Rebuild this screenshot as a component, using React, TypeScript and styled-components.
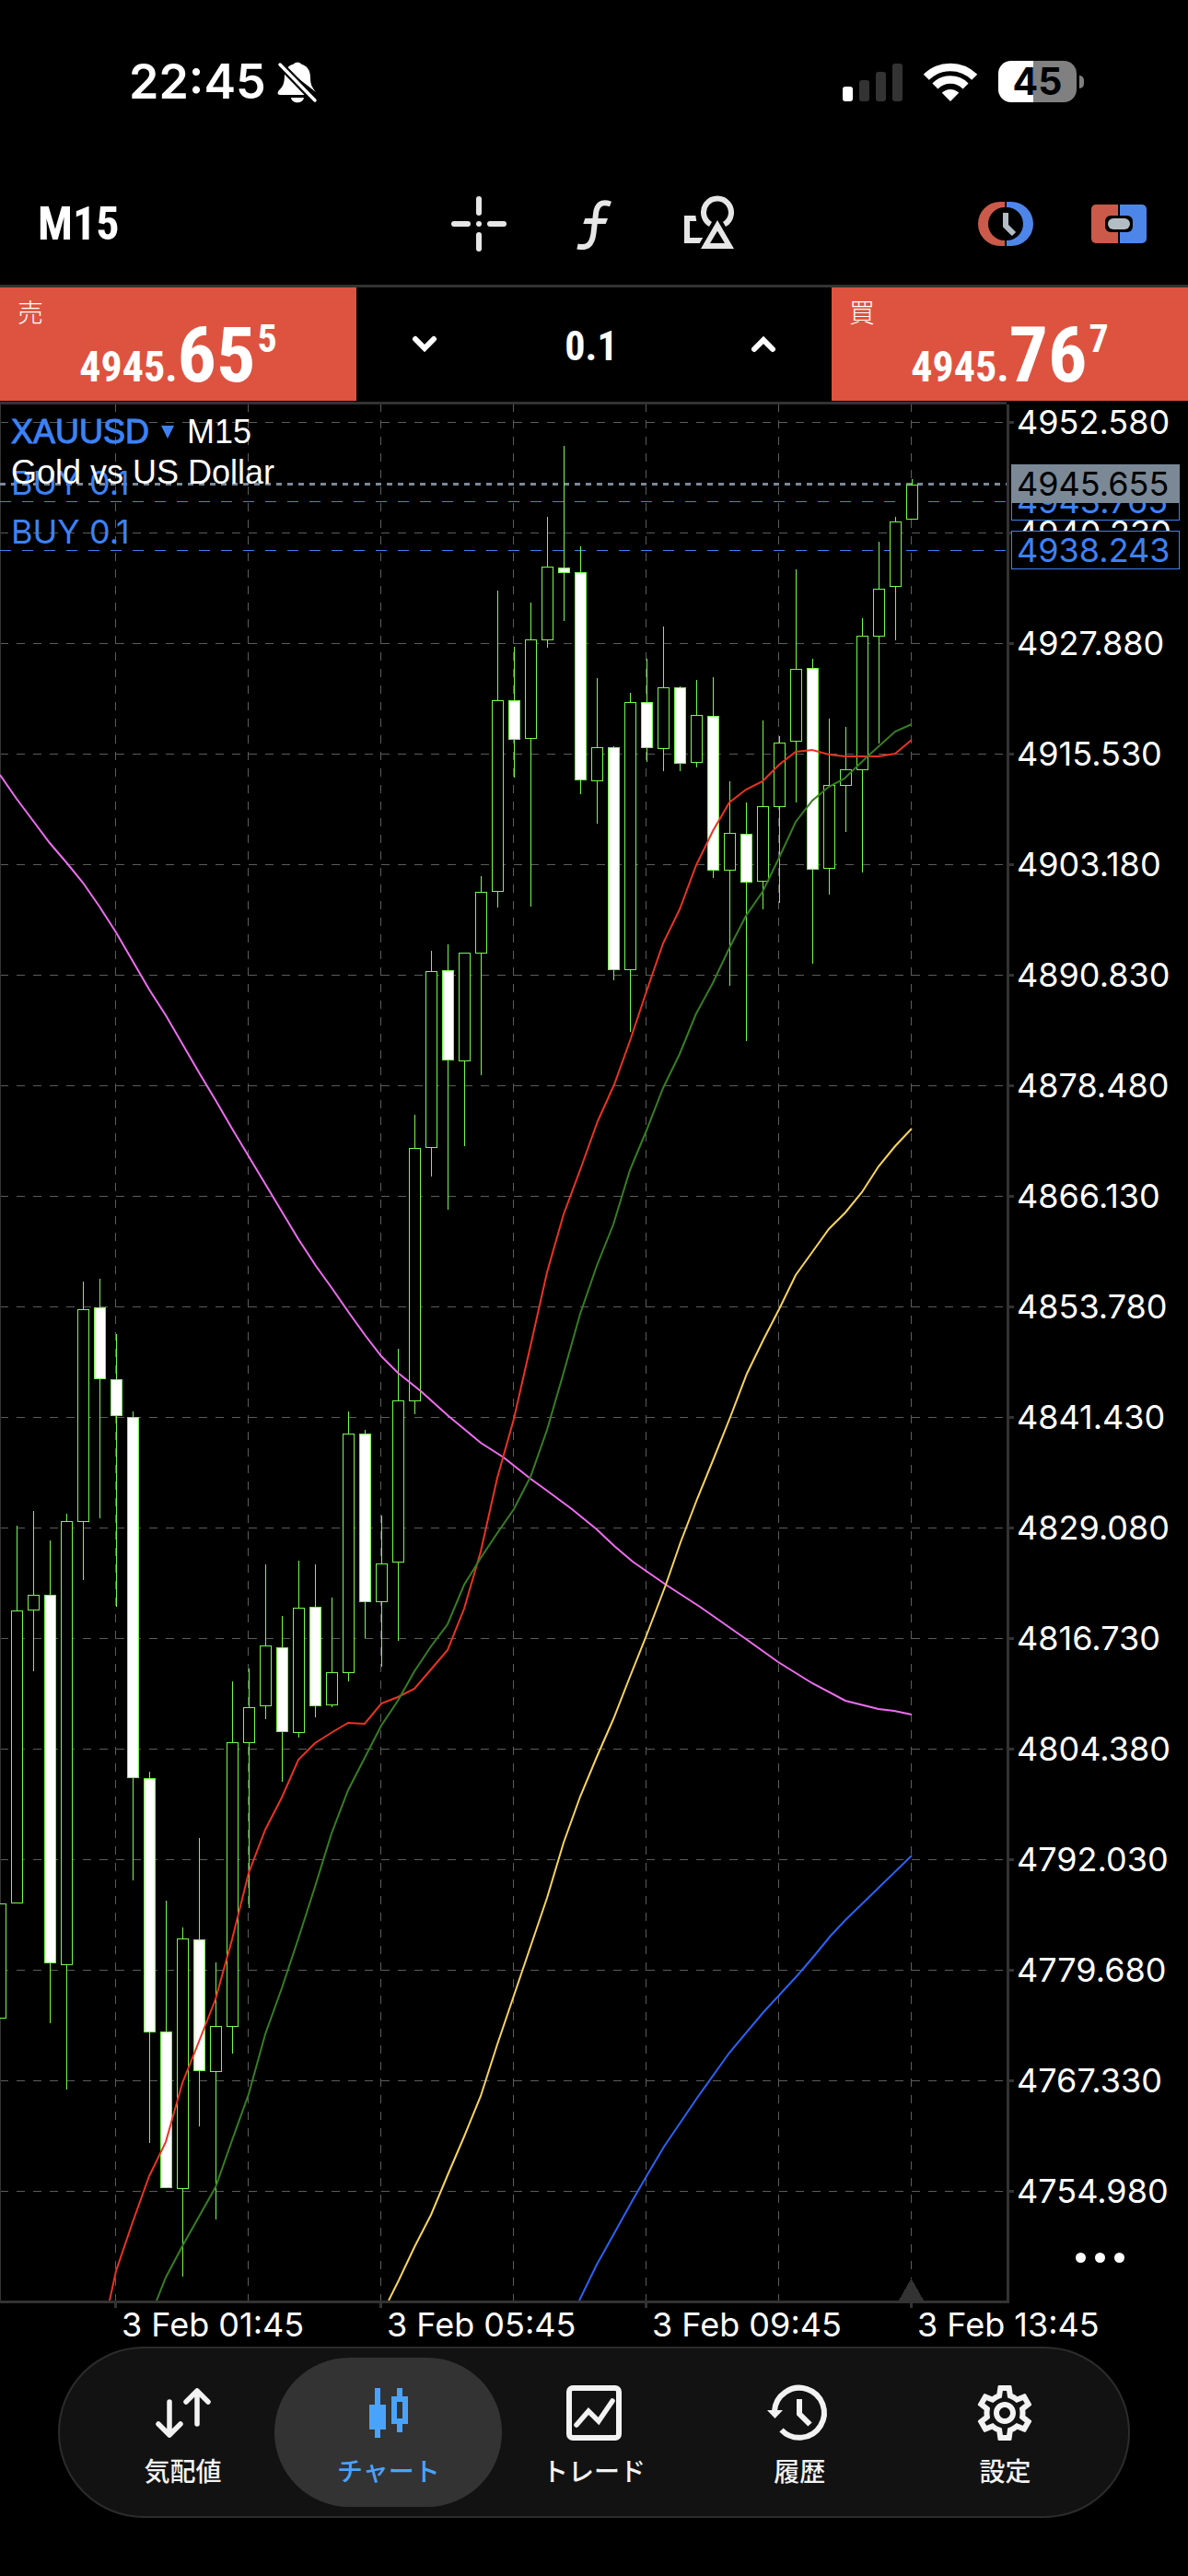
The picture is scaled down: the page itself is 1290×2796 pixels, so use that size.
import React, { useState } from "react";
import styled, { createGlobalStyle } from "styled-components";
import { MdOutlineSettings } from "react-icons/md";

const color = {
  bg: "#000000",
  rule: "#333333",
  grid: "#5c5c5c",
  bar: "#121212",
  sell: "#de5340",
  link: "#3c82f6",
  active: "#4aa3fa",
  icon: "#e6e6e6",
  tag: "#7b8997",
  bull: "#75fb4c",
};

const ui = `Inter, "Noto Sans CJK JP", sans-serif`;
const narrow = `"Liberation Sans Narrow", "Roboto Condensed", Roboto, sans-serif`;
const chartFont = `"Liberation Sans", Arial, sans-serif`;

const Global = createGlobalStyle`
  * { box-sizing: border-box; }
  body { margin: 0; background: ${color.bg}; color: #fff; font-family: ${ui}; }
  button, input { font: inherit; color: inherit; background: none; border: 0; padding: 0; margin: 0; }
  svg { display: block; }
`;

const Page = styled.main`
  display: flex;
  flex-direction: column;
  min-height: 100vh;
  background: ${color.bg};
`;

/* ---------- status bar ---------- */

const StatusBar = styled.header`
  display: flex;
  align-items: center;
  justify-content: space-between;
  height: 177px;
  padding: 0 113px 0 140px;
`;

const StatusGroup = styled.div<{ $gap: number }>`
  display: flex;
  align-items: center;
  gap: ${(p) => p.$gap}px;
`;

const Clock = styled.time`
  font-size: 52px;
  line-height: 60px;
  font-weight: 600;
`;

const Battery = styled.div`
  display: flex;
  align-items: center;
  gap: 3px;
  &::after {
    content: "";
    width: 5px;
    height: 14px;
    border-radius: 0 7px 7px 0;
    background: #808080;
  }
`;

const BatteryCell = styled.div<{ $level: number }>`
  width: 85px;
  height: 45px;
  border-radius: 14px;
  background: linear-gradient(to right, #fff ${(p) => p.$level}%, #808080 ${(p) => p.$level}%);
  color: #000;
  font-size: 41px;
  line-height: 45px;
  font-weight: 700;
  text-align: center;
`;

/* ---------- toolbar ---------- */

const Toolbar = styled.div`
  display: grid;
  grid-template-columns: 1fr auto 1fr;
  align-items: center;
  height: 132px;
  padding: 0 41px;
`;

const Timeframe = styled.button`
  justify-self: start;
  font-family: ${narrow};
  font-size: 50px;
  line-height: 60px;
  font-weight: 700;
`;

const ToolGroup = styled.div<{ $end?: boolean }>`
  display: flex;
  gap: ${(p) => (p.$end ? 63 : 65)}px;
  justify-self: ${(p) => (p.$end ? "end" : "center")};
  padding-right: ${(p) => (p.$end ? 4 : 0)}px;
`;

const IconButton = styled.button`
  width: 60px;
  height: 60px;
  color: ${color.icon};
`;

/* ---------- one-click trading ---------- */

const TradePanel = styled.section`
  display: grid;
  grid-template-columns: 3fr 4fr 3fr;
  height: 127px;
  border-top: 3px solid ${color.rule};
  padding-bottom: 1px;
`;

const QuoteButton = styled.button`
  display: flex;
  flex-direction: column;
  align-items: center;
  background: ${color.sell};
  height: 123px;
`;

const Side = styled.span`
  align-self: flex-start;
  padding: 8px 0 0 19px;
  font-family: "Noto Sans CJK JP", sans-serif;
  font-size: 28px;
  line-height: 36px;
  height: 38px;
  font-weight: 300;
`;

const Price = styled.span`
  display: flex;
  align-items: baseline;
  font-family: ${narrow};
  font-weight: 700;
  font-size: 46px;
  line-height: 72px;
`;

const Pips = styled.span`
  font-size: 84px;
`;

const Fraction = styled.sup`
  align-self: flex-start;
  padding-left: 2px;
  font-size: 42px;
  line-height: 36px;
  vertical-align: baseline;
`;

const Volume = styled.div`
  display: grid;
  grid-template-columns: 148px 1fr 148px;
  align-items: center;
`;

const StepButton = styled.button`
  display: grid;
  place-items: center;
  height: 120px;
`;

const VolumeInput = styled.input`
  width: 100%;
  padding: 4px 6px 0 0;
  text-align: center;
  font-family: ${narrow};
  font-size: 44px;
  line-height: 56px;
  font-weight: 700;
`;

/* ---------- chart ---------- */

const ChartArea = styled.section`
  flex: 1 0 1200px;
  display: grid;
  grid-template-columns: 1fr 197px;
`;

const Plot = styled.div`
  position: relative;
  border-top: 3px solid ${color.rule};
  border-bottom: 3px solid ${color.rule};
`;

const PlotSvg = styled.svg`
  position: absolute;
  inset: 0;
  width: 100%;
  height: 100%;
`;

const Caption = styled.div`
  position: absolute;
  top: 8px;
  left: 12px;
  font-family: ${chartFont};
  font-size: 36px;
  line-height: 44px;
  white-space: nowrap;
`;

const CaptionRow = styled.div`
  display: flex;
  align-items: center;
  gap: 13px;
`;

const SymbolButton = styled.button`
  display: flex;
  align-items: center;
  gap: 12px;
  color: ${color.link};
  -webkit-text-stroke: 1px ${color.link};
`;

const OrderLabel = styled.span`
  position: absolute;
  left: 12px;
  transform: translateY(-40px);
  color: ${color.link};
  font-size: 36px;
  line-height: 40px;
`;

const PriceAxis = styled.div`
  position: relative;
  display: flex;
  flex-direction: column;
  justify-content: space-between;
  margin-top: 3px;
  padding-bottom: 103px;
  border-left: 3px solid ${color.rule};
`;

const PriceLabel = styled.span`
  display: flex;
  align-items: center;
  gap: 3px;
  font-size: 36px;
  line-height: 38px;
  &::before {
    content: "";
    width: 5px;
    height: 3px;
    background: ${color.rule};
  }
`;

const TagLayer = styled.div`
  position: absolute;
  inset: 0 0 3px 2px;
`;

const PriceTag = styled.span<{ $solid?: boolean }>`
  position: absolute;
  left: 0;
  right: 9px;
  height: 42px;
  transform: translateY(-50%);
  padding-left: 5px;
  border: 1px solid ${(p) => (p.$solid ? color.tag : color.link)};
  background: ${(p) => (p.$solid ? color.tag : color.bg)};
  color: ${(p) => (p.$solid ? "#000" : color.link)};
  font-size: 36px;
  line-height: 40px;
`;

const MoreButton = styled.button`
  position: absolute;
  right: 60px;
  bottom: 30px;
  width: 72px;
  height: 40px;
  display: flex;
  align-items: center;
  justify-content: center;
  gap: 10px;
  i {
    width: 11px;
    height: 11px;
    border-radius: 50%;
    background: #fff;
  }
`;

const TimeAxis = styled.div`
  display: grid;
  grid-template-columns: repeat(4, 1fr);
  height: 47px;
  padding: 3px 5px 0 125px;
  margin-right: 8px;
`;

const TimeLabel = styled.span`
  position: relative;
  padding-left: 7px;
  font-size: 36px;
  line-height: 40px;
  white-space: nowrap;
  &::before {
    content: "";
    position: absolute;
    left: -1px;
    top: -3px;
    width: 3px;
    height: 5px;
    background: ${color.rule};
  }
`;

/* ---------- tab bar ---------- */

const TabBar = styled.nav`
  display: flex;
  margin: 0 63px 63px;
  padding: 10px 22px;
  border: 2px solid #2c2c2c;
  border-radius: 93px;
  background: ${color.bar};
`;

const Tab = styled.a<{ $active?: boolean }>`
  flex: 1;
  display: flex;
  flex-direction: column;
  align-items: center;
  gap: 14px;
  height: 162px;
  margin: 0 -12px;
  padding: 30px 12px 0;
  border-radius: 81px;
  background: ${(p) => (p.$active ? "#333333" : "transparent")};
  color: ${(p) => (p.$active ? color.active : "#f2f2f2")};
  font-family: "Noto Sans CJK JP", sans-serif;
  font-size: 28px;
  line-height: 36px;
  font-weight: 500;
  text-decoration: none;
`;

/* ---------- data ---------- */

const TOP_Y = 439;
const PLOT_H = 2058;
const PLOT_W = 1093;
const STEP = 18;

const priceToY = (p: number) => 458 + ((4952.58 - p) * 120) / 12.35;
const priceToTop = (p: number) => `${((priceToY(p) - TOP_Y) / PLOT_H) * 100}%`;

const axisPrices = Array.from({ length: 17 }, (_, i) => (4952.58 - i * 12.35).toFixed(3));
const times = ["3 Feb 01:45", "3 Feb 05:45", "3 Feb 09:45", "3 Feb 13:45"];

// high, body top, body bottom, low, 1 = falling bar
const candles: number[][] = [
  [2066, 2066, 2190, 2190, 0],
  [1656, 1748, 2065, 2065, 0],
  [1640, 1731, 1747, 1813, 0],
  [1672, 1731, 2130, 2195, 1],
  [1643, 1651, 2132, 2267, 0],
  [1391, 1421, 1651, 1714, 0],
  [1388, 1419, 1496, 1647, 1],
  [1448, 1497, 1536, 1743, 1],
  [1532, 1538, 1929, 2040, 1],
  [1923, 1930, 2205, 2325, 1],
  [2063, 2205, 2374, 2374, 1],
  [2092, 2104, 2375, 2470, 0],
  [1995, 2105, 2247, 2307, 1],
  [2130, 2199, 2248, 2408, 0],
  [1825, 1891, 2199, 2228, 0],
  [1811, 1853, 1891, 2070, 0],
  [1698, 1786, 1851, 1865, 0],
  [1754, 1788, 1879, 1933, 1],
  [1694, 1745, 1880, 1885, 0],
  [1698, 1744, 1851, 1863, 1],
  [1734, 1815, 1850, 1852, 0],
  [1532, 1556, 1815, 1824, 0],
  [1552, 1556, 1738, 1777, 1],
  [1645, 1697, 1738, 1808, 0],
  [1464, 1520, 1695, 1780, 0],
  [1210, 1246, 1520, 1534, 0],
  [1032, 1054, 1245, 1276, 0],
  [1025, 1053, 1150, 1312, 1],
  [1034, 1034, 1151, 1243, 0],
  [951, 968, 1034, 1166, 0],
  [641, 760, 967, 984, 0],
  [702, 760, 802, 843, 1],
  [654, 694, 801, 983, 0],
  [561, 615, 694, 702, 0],
  [484, 616, 621, 673, 1],
  [593, 621, 846, 861, 1],
  [736, 811, 847, 893, 0],
  [810, 811, 1052, 1063, 1],
  [752, 762, 1052, 1119, 0],
  [715, 762, 811, 826, 1],
  [680, 746, 812, 836, 0],
  [745, 746, 828, 836, 1],
  [738, 776, 827, 832, 0],
  [735, 777, 944, 952, 1],
  [848, 904, 944, 1069, 0],
  [871, 905, 957, 1129, 1],
  [782, 875, 956, 986, 0],
  [799, 806, 875, 979, 0],
  [618, 726, 804, 870, 0],
  [715, 725, 943, 1045, 1],
  [780, 852, 942, 970, 0],
  [789, 835, 852, 902, 0],
  [671, 690, 835, 946, 0],
  [588, 639, 690, 806, 0],
  [561, 566, 636, 694, 0],
  [520, 526, 563, 563, 0],
];

const averages = [
  {
    stroke: "#ee6df0",
    points:
      "0,841 18,867 36,891 54,915 72,936 90,958 108,984 126,1012 144,1043 162,1074 180,1102 198,1133 216,1164 234,1194 252,1225 270,1255 288,1285 306,1315 324,1345 343,1374 361,1399 379,1425 397,1450 414,1472 432,1490 457,1510 487,1537 522,1566 547,1582 576,1605 594,1618 621,1638 648,1660 667,1678 687,1695 723,1720 760,1744 810,1779 845,1804 882,1827 918,1846 954,1855 971,1857 990,1861",
  },
  {
    stroke: "#ea3323",
    points:
      "119,2497 126,2465 144,2412 162,2362 180,2325 198,2261 216,2216 234,2170 252,2105 270,2033 288,1986 306,1951 324,1910 342,1892 361,1880 378,1870 396,1871 414,1849 432,1842 450,1833 468,1812 486,1791 504,1746 522,1684 540,1604 558,1540 576,1461 594,1381 612,1318 631,1267 649,1217 667,1177 685,1127 702,1076 720,1024 738,987 756,939 774,902 792,871 810,857 828,848 846,830 864,816 882,814 900,819 918,821 942,821 954,821 972,818 990,803",
  },
  {
    stroke: "#377e22",
    points:
      "170,2497 180,2472 198,2438 234,2374 252,2323 270,2273 288,2208 306,2158 324,2104 342,2048 360,1990 378,1943 396,1908 414,1873 432,1846 450,1814 468,1787 486,1763 504,1720 522,1691 540,1664 558,1638 576,1603 594,1552 612,1490 630,1426 648,1374 666,1329 684,1270 702,1227 720,1181 738,1144 756,1100 774,1067 792,1029 810,994 828,968 846,931 864,892 882,869 900,854 917,845 942,821 972,794 990,786",
  },
  {
    stroke: "#f8d45c",
    points:
      "422,2497 433,2475 450,2439 468,2404 486,2361 504,2319 522,2275 540,2219 558,2166 576,2113 594,2060 612,2000 630,1950 648,1907 666,1866 684,1820 702,1775 723,1720 739,1674 757,1627 775,1583 793,1538 811,1491 829,1454 846,1421 864,1384 882,1359 900,1334 918,1316 936,1294 954,1266 972,1244 990,1225",
  },
  {
    stroke: "#2b62f6",
    points:
      "629,2497 648,2458 687,2388 702,2362 721,2330 757,2277 792,2228 829,2184 866,2144 884,2123 902,2101 918,2084 954,2049 990,2014",
  },
];

const orders = [
  { price: 4943.765, label: "BUY 0.1" },
  { price: 4938.243, label: "BUY 0.1" },
];
const lastPrice = 4945.655;

/* ---------- drawings ---------- */

const BellOff = () => (
  <svg width="44" height="46" viewBox="0 0 44 46" fill="#fff" aria-label="silent">
    <path d="M10 9 C12 6 15 4 18 3.500 C19 1 25 1 26 3.500 C33 5.500 36 11 36 18 C36 26 38 29 42 34 Z" />
    <path d="M8 13 L30 37 H3 C0 37 0 34 2 32 C7 27 8 24 8 13 Z" />
    <path d="M15 40 H29 C28 47 16 47 15 40 Z" />
    <path d="M3 4 L41 43" stroke="#000" strokeWidth="8" />
    <path d="M3 4 L41 43" stroke="#fff" strokeWidth="3.500" strokeLinecap="round" />
  </svg>
);

const Signal = () => (
  <svg width="65" height="42" viewBox="0 0 65 42" aria-label="signal">
    <rect x="0" y="26" width="11" height="16" rx="3" fill="#fff" />
    <rect x="18" y="19" width="11" height="23" rx="3" fill="#333" />
    <rect x="36" y="10" width="11" height="32" rx="3" fill="#333" />
    <rect x="54" y="1" width="11" height="41" rx="3" fill="#333" />
  </svg>
);

const Wifi = () => (
  <svg width="58" height="42" viewBox="0 0 58 42" aria-label="wifi" fill="none" stroke="#fff" strokeWidth="8.500">
    <path d="M2.800 15.800 A37 37 0 0 1 55.200 15.800" />
    <path d="M12.400 25.400 A23.500 23.500 0 0 1 45.600 25.400" />
    <path d="M29 42 L19.800 32.800 A13 13 0 0 1 38.200 32.800 Z" fill="#fff" stroke="none" />
  </svg>
);

const Icon = ({ children }: { children: React.ReactNode }) => (
  <svg width="60" height="60" viewBox="0 0 60 60" fill="none" overflow="visible" aria-hidden="true">
    {children}
  </svg>
);

const Crosshair = () => (
  <Icon>
    <path d="M30 3V18M30 42V57M3 30H18M42 30H57" stroke="currentColor" strokeWidth="6" strokeLinecap="round" />
    <circle cx="30" cy="30" r="3" fill="currentColor" />
  </Icon>
);

const FunctionIcon = () => (
  <Icon>
    <path d="M48 8.500C38 5 33 9 32 19L29.500 40C28 52 23 57 12 54.500" stroke="currentColor" strokeWidth="6" />
    <path d="M20.300 24H45L42.700 30H18.300Z" fill="currentColor" />
  </Icon>
);

const Shapes = () => (
  <Icon>
    <path d="M31.500 30.500A15 15 0 1 1 46.500 30.500" stroke="currentColor" strokeWidth="6" />
    <path fillRule="evenodd" d="M39 26L57 57H21ZM39 37.700L31 51H47Z" fill="currentColor" />
    <path d="M3 21H15.300L16.300 27H9V45H23.300L19.700 51H3Z" fill="currentColor" />
  </Icon>
);

const SessionClock = () => (
  <Icon>
    <path d="M29 6H24A24 24 0 0 0 24 54H29V48A18 18 0 0 1 29 12Z" fill="#cb5a4a" />
    <path d="M31 6H36A24 24 0 0 1 36 54H31V48A18 18 0 0 0 31 12Z" fill="#4d86e8" />
    <path d="M30 18V32L39 41" stroke="#b3bec4" strokeWidth="6" />
  </Icon>
);

const OneClick = () => (
  <Icon>
    <path d="M29 9H5A5 5 0 0 0 0 14V46A5 5 0 0 0 5 51H29Z" fill="#cb5a4a" />
    <path d="M31 9H55A5 5 0 0 1 60 14V46A5 5 0 0 1 55 51H31Z" fill="#4d86e8" />
    <rect x="15" y="21" width="30" height="18" rx="6" fill="#000" />
    <rect x="18" y="24" width="24" height="12" rx="6" fill="#b3bec4" />
  </Icon>
);

const Chevron = ({ up }: { up?: boolean }) => (
  <svg width="28" height="20" viewBox="0 0 28 20" fill="none" aria-hidden="true">
    <path d={up ? "M4 15L14 5L24 15" : "M4 4L14 14L24 4"} stroke="#fff" strokeWidth="6" strokeLinecap="round" />
  </svg>
);

const QuotesIcon = () => (
  <Icon>
    <path
      d="M15 18V54M3 42L15 54L27 42M45 42V6M33 18L45 6L57 18"
      stroke="currentColor"
      strokeWidth="5.500"
      strokeLinecap="round"
      strokeLinejoin="round"
    />
  </Icon>
);

const ChartIcon = () => (
  <Icon>
    <path fill="currentColor" d="M15 3H21V21H27V48H21V57H15V48H9V21H15Z" />
    <path
      fill="currentColor"
      fillRule="evenodd"
      d="M39 3H45V12H51V42H45V51H39V42H33V12H39ZM39 18V36H45V18Z"
    />
  </Icon>
);

const TradeIcon = () => (
  <Icon>
    <rect x="3" y="3" width="54" height="54" rx="4" stroke="currentColor" strokeWidth="6" />
    <path d="M11 43L24 28L35 39L50 17" stroke="currentColor" strokeWidth="5.500" strokeLinecap="round" />
  </Icon>
);

const HistoryIcon = () => (
  <Icon>
    <path d="M3 28A27 27 0 1 1 10.500 48.500" stroke="currentColor" strokeWidth="6" />
    <path d="M-5 27H12L3.500 36Z" fill="currentColor" />
    <path d="M30 15V31L41.500 42.500" stroke="currentColor" strokeWidth="6" />
  </Icon>
);

const SettingsIcon = () => <MdOutlineSettings size={60} viewBox="2 2 20 20" aria-hidden="true" />;

const Candle = ({ index, bar }: { index: number; bar: number[] }) => {
  const [high, top, bottom, low, falling] = bar;
  const x = index * STEP;
  return (
    <g stroke={color.bull} strokeWidth="1">
      <path d={`M${x + 0.5} ${high}V${top}M${x + 0.5} ${bottom + 1}V${low + 1}`} />
      <rect x={x - 5.5} y={top + 0.5} width="12" height={bottom - top} fill={falling ? "#fff" : color.bg} />
    </g>
  );
};

const PriceChart = () => {
  const bottom = TOP_Y + PLOT_H;
  return (
    <PlotSvg viewBox={`0 ${TOP_Y} ${PLOT_W} ${PLOT_H}`} preserveAspectRatio="none" role="img" aria-label="XAUUSD M15">
      <g shapeRendering="crispEdges" fill="none">
        <g stroke={color.grid} strokeDasharray="9 9">
          {axisPrices.map((p, i) => (
            <path key={p} d={`M0 ${458.5 + i * 120}H${PLOT_W}`} />
          ))}
          {[0, 1, 2, 3, 4, 5, 6].map((i) => (
            <path key={i} d={`M${125.5 + i * 144} 438V${bottom}`} />
          ))}
        </g>
        <path d={`M976 ${bottom}L989.500 2473L1003 ${bottom}Z`} fill={color.rule} />
        <path d={`M0.500 ${TOP_Y}V${bottom}`} stroke={color.rule} />
        {orders.map((o) => (
          <path
            key={o.price}
            d={`M0 ${Math.floor(priceToY(o.price) + 0.4) + 0.5}H${PLOT_W}`}
            stroke={color.link}
            strokeDasharray="12 12"
          />
        ))}
        <path
          d={`M0 ${Math.floor(priceToY(lastPrice)) + 0.5}H${PLOT_W}`}
          stroke="#7a8899"
          strokeWidth="3"
          strokeDasharray="6 6"
        />
        {candles.map((bar, i) => (
          <Candle key={i} index={i} bar={bar} />
        ))}
      </g>
      <g fill="none" strokeWidth="2">
        {averages.map((a) => (
          <polyline key={a.stroke} points={a.points} stroke={a.stroke} />
        ))}
      </g>
    </PlotSvg>
  );
};

const tabs = [
  { label: "気配値", icon: <QuotesIcon /> },
  { label: "チャート", icon: <ChartIcon />, active: true },
  { label: "トレード", icon: <TradeIcon /> },
  { label: "履歴", icon: <HistoryIcon /> },
  { label: "設定", icon: <SettingsIcon /> },
];

const Quote = ({ side, whole, pips, fraction }: { side: string; whole: string; pips: string; fraction: string }) => (
  <QuoteButton>
    <Side>{side}</Side>
    <Price>
      {whole}
      <Pips>{pips}</Pips>
      <Fraction>{fraction}</Fraction>
    </Price>
  </QuoteButton>
);

export default function App() {
  const [volume, setVolume] = useState("0.1");
  const step = (d: number) => setVolume((v) => Math.max(0.1, Number(v) + d).toFixed(1));

  return (
    <Page>
      <Global />
      <StatusBar>
        <StatusGroup $gap={12}>
          <Clock>22:45</Clock>
          <BellOff />
        </StatusGroup>
        <StatusGroup $gap={23}>
          <Signal />
          <Wifi />
          <Battery>
            <BatteryCell $level={45}>45</BatteryCell>
          </Battery>
        </StatusGroup>
      </StatusBar>

      <Toolbar>
        <Timeframe>M15</Timeframe>
        <ToolGroup>
          <IconButton aria-label="Crosshair"><Crosshair /></IconButton>
          <IconButton aria-label="Indicators"><FunctionIcon /></IconButton>
          <IconButton aria-label="Objects"><Shapes /></IconButton>
        </ToolGroup>
        <ToolGroup $end>
          <IconButton aria-label="Sessions"><SessionClock /></IconButton>
          <IconButton aria-label="One click trading"><OneClick /></IconButton>
        </ToolGroup>
      </Toolbar>

      <TradePanel>
        <Quote side="売" whole="4945." pips="65" fraction="5" />
        <Volume>
          <StepButton aria-label="Decrease volume" onClick={() => step(-0.1)}><Chevron /></StepButton>
          <VolumeInput aria-label="Volume" value={volume} onChange={(e) => setVolume(e.target.value)} />
          <StepButton aria-label="Increase volume" onClick={() => step(0.1)}><Chevron up /></StepButton>
        </Volume>
        <Quote side="買" whole="4945." pips="76" fraction="7" />
      </TradePanel>

      <ChartArea>
        <Plot>
          <PriceChart />
          {orders.map((o) => (
            <OrderLabel key={o.price} style={{ top: priceToTop(o.price) }}>{o.label}</OrderLabel>
          ))}
          <Caption>
            <CaptionRow>
              <SymbolButton>
                XAUUSD
                <svg width="16" height="16" viewBox="0 0 16 16" aria-hidden="true">
                  <path d="M1 1H15L8 15Z" fill={color.link} />
                </svg>
              </SymbolButton>
              <span>M15</span>
            </CaptionRow>
            <div>Gold vs US Dollar</div>
          </Caption>
        </Plot>
        <PriceAxis>
          {axisPrices.map((p) => (
            <PriceLabel key={p}>{p}</PriceLabel>
          ))}
          <TagLayer>
            {orders.map((o) => (
              <PriceTag key={o.price} style={{ top: priceToTop(o.price) }}>{o.price.toFixed(3)}</PriceTag>
            ))}
            <PriceTag $solid style={{ top: priceToTop(lastPrice) }}>{lastPrice.toFixed(3)}</PriceTag>
          </TagLayer>
          <MoreButton aria-label="More"><i /><i /><i /></MoreButton>
        </PriceAxis>
      </ChartArea>

      <TimeAxis>
        {times.map((t) => (
          <TimeLabel key={t}>{t}</TimeLabel>
        ))}
      </TimeAxis>

      <TabBar>
        {tabs.map((t) => (
          <Tab key={t.label} href="#" $active={t.active} aria-current={t.active ? "page" : undefined}>
            {t.icon}
            {t.label}
          </Tab>
        ))}
      </TabBar>
    </Page>
  );
}
